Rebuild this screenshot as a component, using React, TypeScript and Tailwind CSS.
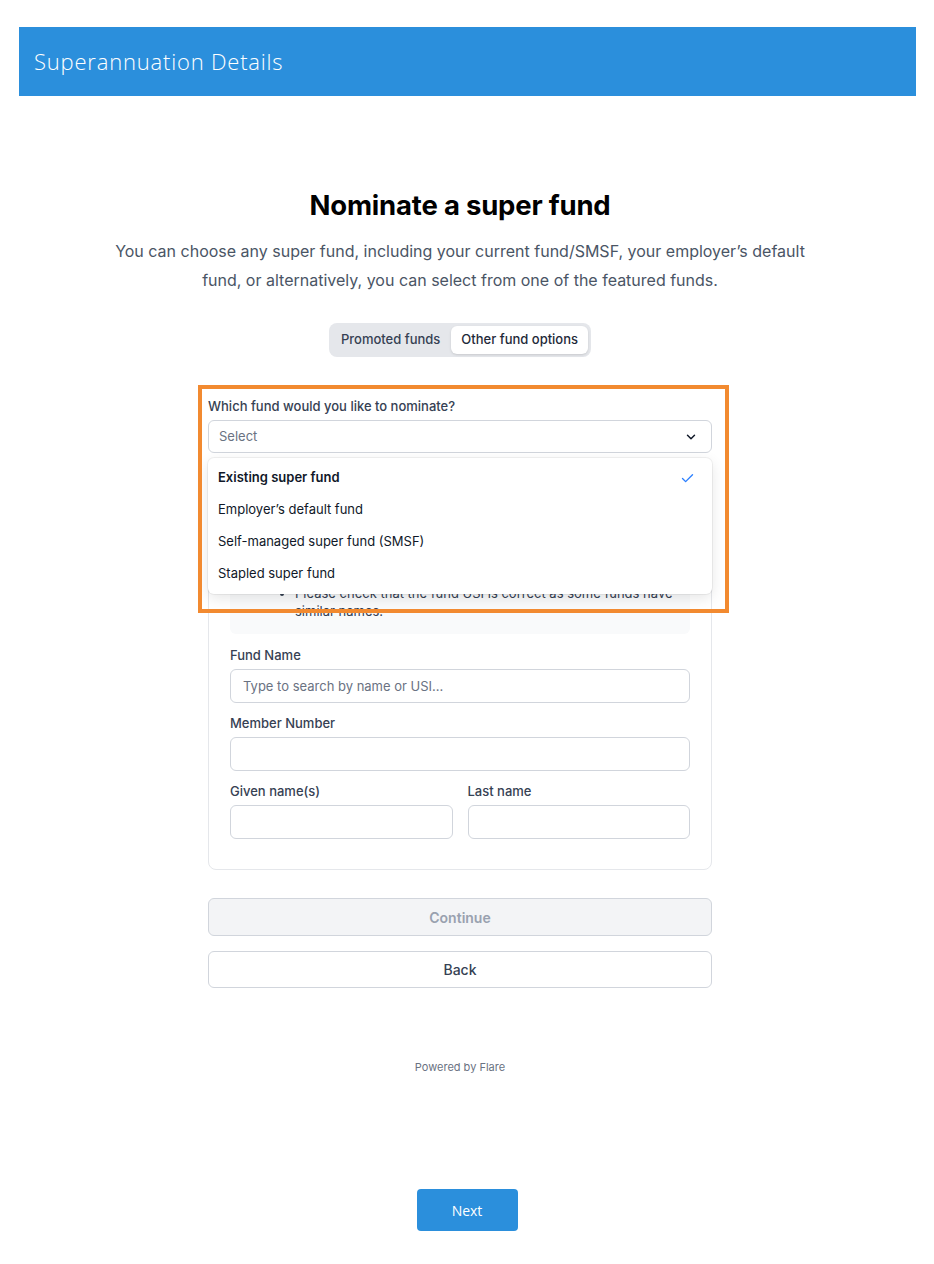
import { Check, ChevronDown } from "lucide-react";

const FUND_OPTIONS = [
  "Existing super fund",
  "Employer’s default fund",
  "Self-managed super fund (SMSF)",
  "Stapled super fund",
];

function Field({ label, placeholder }: { label: string; placeholder?: string }) {
  return (
    <div className="flex flex-col">
      <label className="text-[13px] leading-4 font-medium text-gray-700 mb-[6px]">{label}</label>
      <input
        placeholder={placeholder}
        className="h-[34px] w-full rounded-md border border-gray-300 bg-white px-3 text-[13px] text-gray-800 placeholder:text-gray-500 focus:outline-none"
      />
    </div>
  );
}

export default function App() {
  return (
    <div
      className="relative min-h-[1264px] bg-white"
      style={{ fontFamily: "Inter, 'Noto Sans', sans-serif" }}
    >
      {/* header */}
      <div className="ml-[19px] w-[897px] pt-[27px]">
        <div className="h-[69px] bg-[#2b8fdc] flex items-center px-[15px]">
          <h1
            className="text-white text-[22px] font-light tracking-[0.8px]"
            style={{ fontFamily: "'Open Sans', Lato, sans-serif" }}
          >
            Superannuation Details
          </h1>
        </div>
      </div>

      <div className="w-[920px] flex flex-col items-center">
        <h2 className="mt-[92px] text-[27.5px] leading-[34px] font-bold text-black tracking-[-0.2px]">
          Nominate a super fund
        </h2>
        <p className="mt-[15px] w-[720px] text-center text-[16px] leading-[29px] text-gray-600">
          You can choose any super fund, including your current fund/SMSF, your employer’s default fund, or
          alternatively, you can select from one of the featured funds.
        </p>

        {/* tabs */}
        <div className="mt-[28px] flex items-center gap-[2px] rounded-lg bg-gray-200 p-[3px]">
          <button className="h-[28px] px-[9px] text-[13px] font-medium text-gray-700 rounded-md">
            Promoted funds
          </button>
          <button className="h-[28px] px-[10px] text-[13px] font-medium text-gray-800 rounded-md bg-white shadow-sm">
            Other fund options
          </button>
        </div>

        <div className="mt-[41px] w-[504px]">
          {/* select */}
          <div className="relative">
            <label className="block text-[13px] leading-4 font-medium text-gray-700 mb-[6px]">
              Which fund would you like to nominate?
            </label>
            <div className="h-[33px] rounded-md border border-gray-300 bg-white flex items-center justify-between pl-[10px] pr-[13px]">
              <span className="text-[13px] text-gray-500">Select</span>
              <ChevronDown size={14} strokeWidth={2.5} className="text-gray-900" />
            </div>

            {/* dropdown */}
            <div className="absolute left-0 right-0 top-[60px] z-10 rounded-md bg-white py-1 shadow-[0_4px_14px_rgba(0,0,0,0.1)] ring-1 ring-black/5">
              {FUND_OPTIONS.map((o, i) => (
                <div key={o} className="h-8 flex items-center justify-between pl-[10px] pr-[17px] text-[13px] text-gray-900">
                  <span className={i === 0 ? "font-semibold" : ""}>{o}</span>
                  {i === 0 && <Check size={15} strokeWidth={2.2} className="text-blue-500" />}
                </div>
              ))}
            </div>
          </div>

          {/* card */}
          <div className="mt-[17px] rounded-lg border border-gray-200 px-[21px] pt-[21px] pb-[30px]">
            <div className="h-[142px] rounded-md bg-gray-50 flex flex-col justify-end pb-[14px] pl-[48px] pr-4">
              <ul className="list-disc pl-[17px] text-[13px] leading-[18px] text-gray-700">
                <li>Please check that the fund USI is correct as some funds have similar names.</li>
              </ul>
            </div>
            <div className="mt-[13px] flex flex-col gap-[12px]">
              <Field label="Fund Name" placeholder="Type to search by name or USI..." />
              <Field label="Member Number" />
              <div className="grid grid-cols-2 gap-[15px]">
                <Field label="Given name(s)" />
                <Field label="Last name" />
              </div>
            </div>
          </div>

          <button className="mt-[28px] h-[38px] w-full rounded-md border border-gray-300 bg-gray-100 text-[14px] font-semibold text-gray-400">
            Continue
          </button>
          <button className="mt-[15px] h-[37px] w-full rounded-md border border-gray-300 bg-white text-[14px] font-medium text-gray-700">
            Back
          </button>
        </div>

        <p className="mt-[71px] text-[11px] leading-4 text-gray-500">Powered by Flare</p>
      </div>

      <div className="mt-[114px] flex justify-center">
        <button
          className="h-[42px] w-[101px] rounded-[4px] bg-[#2b8fdc] text-[14px] text-white"
          style={{ fontFamily: "'Open Sans', sans-serif" }}
        >
          Next
        </button>
      </div>

      {/* annotation highlight */}
      <div className="pointer-events-none absolute left-[198px] top-[385px] w-[531px] h-[228px] border-[4px] border-[#f28a30] z-20" />
    </div>
  );
}
